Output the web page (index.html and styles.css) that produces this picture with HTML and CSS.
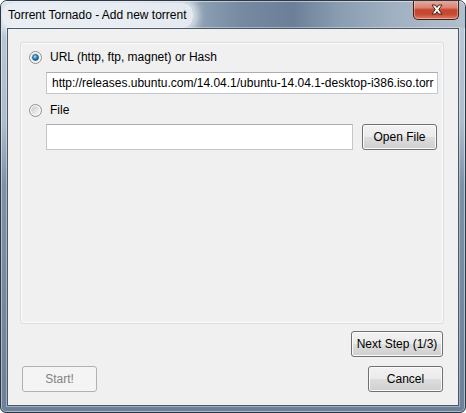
FILE: index.html
```html
<!DOCTYPE html>
<html>
<head>
<meta charset="utf-8">
<link rel="stylesheet" href="styles.css">
</head>
<body>
<div class="window">
  <div class="titlebar">
    <span class="title">Torrent Tornado - Add new torrent</span>
    <div class="close">
      <svg width="12" height="11" viewBox="0 0 12 11">
        <polygon points="1,1 4.3,1 6,3.4 7.7,1 11,1 7.8,5.5 11,10 7.7,10 6,7.6 4.3,10 1,10 4.2,5.5" fill="#ffffff" stroke="#4a2019" stroke-width="1" stroke-linejoin="round"/>
      </svg>
    </div>
  </div>
  <div class="client">
    <div class="group">
      <div class="option">
        <svg class="radio" width="13" height="13" viewBox="0 0 13 13">
          <defs>
            <linearGradient id="rg1" x1="0" y1="0" x2="1" y2="1"><stop offset="0" stop-color="#c9c9c9"/><stop offset="1" stop-color="#fbfbfb"/></linearGradient>
            <radialGradient id="dot1" cx="0.4" cy="0.35" r="0.75"><stop offset="0" stop-color="#9ae6ff"/><stop offset="0.45" stop-color="#2b8fd1"/><stop offset="1" stop-color="#0c426f"/></radialGradient>
          </defs>
          <circle cx="6.5" cy="6.5" r="6" fill="#f5f5f5" stroke="#8e8f8f"/>
          <circle cx="6.5" cy="6.5" r="4.3" fill="url(#rg1)"/>
          <circle cx="6.5" cy="6.5" r="3" fill="url(#dot1)" stroke="#1b3d5c" stroke-width="0.6"/>
        </svg>
        <span>URL (http, ftp, magnet) or Hash</span>
      </div>
      <div class="field url-field">http://releases.ubuntu.com/14.04.1/ubuntu-14.04.1-desktop-i386.iso.torr</div>
      <div class="option second">
        <svg class="radio" width="13" height="13" viewBox="0 0 13 13">
          <defs>
            <linearGradient id="rg2" x1="0" y1="0" x2="1" y2="1"><stop offset="0" stop-color="#c9c9c9"/><stop offset="1" stop-color="#fbfbfb"/></linearGradient>
          </defs>
          <circle cx="6.5" cy="6.5" r="6" fill="#f5f5f5" stroke="#8e8f8f"/>
          <circle cx="6.5" cy="6.5" r="4.3" fill="url(#rg2)"/>
        </svg>
        <span>File</span>
      </div>
      <div class="file-row">
        <div class="field file-field"></div>
        <button class="btn open-btn">Open File</button>
      </div>
    </div>
    <div class="next-row">
      <button class="btn next-btn">Next Step (1/3)</button>
    </div>
    <div class="bottom-row">
      <button class="btn start-btn" disabled>Start!</button>
      <button class="btn cancel-btn">Cancel</button>
    </div>
  </div>
</div>
</body>
</html>
```

FILE: styles.css
```css
html, body {
  margin: 0;
  padding: 0;
  background: #ffffff;
}

.window {
  box-sizing: border-box;
  width: 466px;
  height: 413px;
  border: 1px solid #2c3846;
  border-radius: 7px 7px 6px 6px;
  background: linear-gradient(to bottom, #bccad8 0%, #adbccc 30%, #7d91a7 45%, #6c8097 100%);
  box-shadow: inset 0 0 0 1px rgba(255, 255, 255, 0.45);
  display: flex;
  flex-direction: column;
  overflow: hidden;
  font-family: "Liberation Sans", Arial, sans-serif;
  font-size: 12px;
  color: #000;
}

.titlebar {
  height: 27px;
  flex: none;
  display: flex;
  align-items: flex-start;
  background: linear-gradient(to right, #c0cddb 0%, #b4c3d2 25%, #8c9fb3 43%, #7589a1 52%, #6b8098 63%, #8a9db1 73%, #a1b1c2 85%, #b2bfcc 100%);
  border-radius: 6px 6px 0 0;
  box-shadow: inset 0 1px 0 rgba(255, 255, 255, 0.5);
}

.title {
  margin: 2px 0 0 1px;
  padding: 4px 6px;
  line-height: 17px;
  white-space: nowrap;
  background: rgba(238, 242, 246, 0.88);
  border-radius: 10px;
  box-shadow: 0 0 8px 5px rgba(238, 242, 246, 0.82);
}

.close {
  margin-left: auto;
  margin-right: 6px;
  margin-top: -1px;
  width: 46px;
  height: 20px;
  box-sizing: border-box;
  border: 1px solid #4e1a12;
  border-top: none;
  border-radius: 0 0 5px 5px;
  background: linear-gradient(to bottom, #e9b0a4 0%, #d98470 40%, #c8452f 52%, #c54a35 75%, #d9806b 100%);
  box-shadow: inset 0 0 0 1px rgba(255, 255, 255, 0.35);
  display: flex;
  align-items: center;
  justify-content: center;
}

.close svg {
  display: block;
  margin-left: 1px;
}

.client {
  flex: 1;
  margin: 0 6px 6px;
  border: 1px solid #4a5868;
  background: #f0f0f0;
  padding: 13px 15px 0 12px;
  display: flex;
  flex-direction: column;
  box-shadow: 0 0 0 1px rgba(255, 255, 255, 0.35);
}

.group {
  box-sizing: border-box;
  width: 424px;
  height: 282px;
  border: 1px solid #d5dfe5;
  border-radius: 3px;
  box-shadow: inset 0 0 0 1px #fbfbfb;
  padding: 8px 0 0 8px;
}

.option {
  display: flex;
  align-items: center;
  height: 13px;
  gap: 8px;
  line-height: 13px;
}

.option.second {
  margin-top: 10px;
}

.radio {
  display: block;
  flex: none;
}

.field {
  box-sizing: border-box;
  background: #ffffff;
  border: 1px solid #c3c7ce;
  border-top-color: #abadb3;
  white-space: nowrap;
  overflow: hidden;
}

.url-field {
  margin: 8px 0 0 17px;
  width: 392px;
  height: 22px;
  line-height: 20px;
  padding: 0 0 0 5px;
}

.file-row {
  display: flex;
  gap: 9px;
  margin: 7px 0 0 17px;
}

.file-field {
  width: 307px;
  height: 26px;
}

.btn {
  box-sizing: border-box;
  height: 26px;
  padding: 0;
  font-family: "Liberation Sans", Arial, sans-serif;
  font-size: 12px;
  color: #000;
  border: 1px solid #707070;
  border-radius: 3px;
  background: linear-gradient(to bottom, #f2f2f2 0%, #ebebeb 48%, #dddddd 52%, #cfcfcf 100%);
  box-shadow: inset 0 0 0 1px #fbfbfb;
}

.open-btn {
  width: 75px;
}

.next-row {
  display: flex;
  justify-content: flex-end;
  margin-top: 7px;
}

.next-btn {
  width: 92px;
}

.bottom-row {
  display: flex;
  justify-content: space-between;
  margin-top: 9px;
}

.start-btn {
  width: 75px;
  margin-left: 2px;
  color: #838383;
  border-color: #adb2b5;
  background: #f4f4f4;
  box-shadow: none;
}

.cancel-btn {
  width: 75px;
}
```
